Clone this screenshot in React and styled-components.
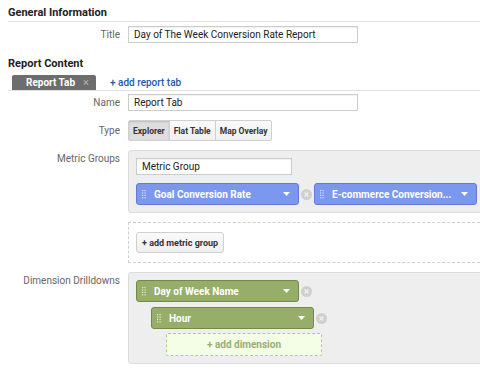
import React from "react";
import styled, { createGlobalStyle } from "styled-components";

const GlobalStyle = createGlobalStyle`
  html, body {
    margin: 0;
    padding: 0;
    background: #ffffff;
    overflow: hidden;
  }
  body {
    font-family: Roboto, "Liberation Sans", Arial, sans-serif;
    color: #333;
  }
`;

const metrics = ["Goal Conversion Rate", "E-commerce Conversion..."];

const App = () => {
  return (
    <Page>
      <GlobalStyle />
      <SectionTitle>General Information</SectionTitle>
      <Row $top={4}>
        <Label $center>Title</Label>
        <TextInput defaultValue="Day of The Week Conversion Rate Report" />
      </Row>

      <SectionTitle $plain $top={13}>Report Content</SectionTitle>
      <TabBar>
        <Tab>
          Report Tab <TabClose>×</TabClose>
        </Tab>
        <AddTab>+ add report tab</AddTab>
      </TabBar>

      <Row $top={3}>
        <Label $center>Name</Label>
        <TextInput defaultValue="Report Tab" />
      </Row>

      <Row $top={9}>
        <Label $center>Type</Label>
        <ButtonGroup>
          <TypeButton $active>Explorer</TypeButton>
          <TypeButton>Flat Table</TypeButton>
          <TypeButton>Map Overlay</TypeButton>
        </ButtonGroup>
      </Row>

      <Row $top={9}>
        <Label $pad={3}>Metric Groups</Label>
        <Panel>
          <GroupInput defaultValue="Metric Group" />
          <PillLine>
            {metrics.map((m, i) => (
              <React.Fragment key={m}>
                {i > 0 && <Remove />}
                <Pill $color="blue">
                  <Grip />
                  <PillText>{m}</PillText>
                  <Caret />
                </Pill>
              </React.Fragment>
            ))}
          </PillLine>
        </Panel>
      </Row>

      <Row $top={9}>
        <span />
        <DashedBox>
          <SmallButton>+ add metric group</SmallButton>
        </DashedBox>
      </Row>

      <Row $top={9}>
        <Label $pad={3}>Dimension Drilldowns</Label>
        <Panel>
          <PillLine>
            <Pill $color="green">
              <Grip />
              <PillText>Day of Week Name</PillText>
              <Caret />
            </Pill>
            <Remove />
          </PillLine>
          <PillLine $indent={15} $top={5}>
            <Pill $color="green">
              <Grip />
              <PillText>Hour</PillText>
              <Caret />
            </Pill>
            <Remove />
          </PillLine>
          <AddDimension>+ add dimension</AddDimension>
        </Panel>
      </Row>
    </Page>
  );
};

export default App;

const Grip = () => (
  <GripIcon width="4" height="9" viewBox="0 0 4 9">
    {[0, 1, 2, 3].map((r) =>
      [0, 1].map((c) => (
        <rect key={`${r}-${c}`} x={c * 2.5} y={r * 2.4} width="1.2" height="1.2" fill="rgba(255,255,255,0.75)" />
      ))
    )}
  </GripIcon>
);

const Caret = () => (
  <CaretIcon width="7" height="4" viewBox="0 0 7 4">
    <path d="M0 0 L7 0 L3.5 4 Z" fill="#fff" />
  </CaretIcon>
);

const Remove = () => (
  <RemoveIcon width="11" height="11" viewBox="0 0 11 11">
    <circle cx="5.5" cy="5.5" r="5.5" fill="#cfcfcf" />
    <path d="M3.6 3.6 L7.4 7.4 M7.4 3.6 L3.6 7.4" stroke="#f0f0f0" strokeWidth="1.4" />
  </RemoveIcon>
);

const Page = styled.div`
  padding: 0 0 0 8px;
  width: 480px;
  box-sizing: border-box;
`;

const SectionTitle = styled.div`
  font-size: 11px;
  font-weight: bold;
  color: #222;
  height: 15px;
  line-height: 15px;
  padding-top: ${(p) => p.$top ?? 5}px;
  padding-bottom: 1px;
  border-bottom: ${(p) => (p.$plain ? "none" : "1px solid #e2e2e2")};
`;

const Row = styled.div`
  display: grid;
  grid-template-columns: 112px 1fr;
  column-gap: 8px;
  align-items: start;
  margin-top: ${(p) => p.$top || 0}px;
`;

const Label = styled.div`
  font-size: 10px;
  color: #666;
  text-align: right;
  align-self: ${(p) => (p.$center ? "center" : "start")};
  padding-top: ${(p) => p.$pad || 0}px;
`;

const TextInput = styled.input`
  width: 230px;
  height: 17px;
  box-sizing: border-box;
  border: 1px solid #cccccc;
  box-shadow: inset 0 1px 1px rgba(0, 0, 0, 0.06);
  font-family: Roboto, "Liberation Sans", Arial, sans-serif;
  font-size: 10px;
  color: #222;
  padding: 0 5px;
  margin: 0;
  outline: none;
`;

const TabBar = styled.div`
  display: flex;
  align-items: center;
  margin-top: 3px;
  height: 15px;
  border-bottom: 1px solid #e2e2e2;
`;

const Tab = styled.div`
  margin-left: 4px;
  width: 84px;
  height: 15px;
  box-sizing: border-box;
  background: #6d6d6d;
  border-radius: 2px 2px 0 0;
  color: #fff;
  font-weight: bold;
  font-size: 10px;
  line-height: 15px;
  padding-left: 14px;
  display: flex;
  align-items: center;
  gap: 8px;
`;

const TabClose = styled.span`
  color: #b5b5b5;
  font-weight: normal;
  font-size: 11px;
`;

const AddTab = styled.a`
  margin-left: 14px;
  font-size: 10px;
  font-weight: 500;
  color: #1c5aa8;
  text-decoration: none;
`;

const ButtonGroup = styled.div`
  display: flex;
  height: 21px;
`;

const TypeButton = styled.div`
  height: 21px;
  box-sizing: border-box;
  padding: 0 4px;
  display: flex;
  align-items: center;
  font-weight: bold;
  font-size: 8.5px;
  color: #333;
  border: 1px solid #d0d0d0;
  margin-left: -1px;
  background: ${(p) => (p.$active ? "#dedede" : "linear-gradient(#fafafa, #f0f0f0)")};
  box-shadow: ${(p) => (p.$active ? "inset 0 1px 2px rgba(0,0,0,0.15)" : "none")};
  &:first-child {
    margin-left: 0;
    border-radius: 2px 0 0 2px;
  }
  &:last-child {
    border-radius: 0 2px 2px 0;
  }
`;

const Panel = styled.div`
  width: 362px;
  box-sizing: border-box;
  background: #eeeeee;
  border: 1px solid #dcdcdc;
  border-radius: 3px;
  padding: 7px 7px 7px;
`;

const GroupInput = styled(TextInput)`
  width: 156px;
  display: block;
  margin-bottom: 8px;
`;

const PillLine = styled.div`
  display: flex;
  align-items: center;
  gap: 2px;
  margin-left: ${(p) => p.$indent || 0}px;
  margin-top: ${(p) => p.$top || 0}px;
`;

const Pill = styled.div`
  width: 163px;
  height: 22px;
  box-sizing: border-box;
  border-radius: 3px;
  display: flex;
  align-items: center;
  padding: 0 8px 0 5px;
  background: ${(p) => (p.$color === "green" ? "#97ae6b" : "#7c97ee")};
  border: 1px solid ${(p) => (p.$color === "green" ? "#718a48" : "#5e7bd6")};
  color: #fff;
`;

const GripIcon = styled.svg`
  flex: none;
  margin-right: 8px;
`;

const PillText = styled.span`
  flex: 1;
  font-weight: bold;
  font-size: 10px;
  white-space: nowrap;
  overflow: hidden;
`;

const CaretIcon = styled.svg`
  flex: none;
`;

const RemoveIcon = styled.svg`
  flex: none;
`;

const DashedBox = styled.div`
  width: 362px;
  height: 41px;
  box-sizing: border-box;
  border: 1px dashed #cfcfcf;
  display: flex;
  align-items: center;
  padding-left: 7px;
`;

const SmallButton = styled.div`
  height: 21px;
  box-sizing: border-box;
  padding: 0 5px;
  display: flex;
  align-items: center;
  border: 1px solid #cfcfcf;
  border-radius: 3px;
  background: linear-gradient(#fafafa, #efefef);
  font-weight: bold;
  font-size: 9px;
  color: #333;
`;

const AddDimension = styled.div`
  margin: 4px 0 0 30px;
  width: 156px;
  height: 23px;
  box-sizing: border-box;
  border: 1px dashed #b4c98f;
  border-radius: 2px;
  background: #f4fde6;
  color: #98af73;
  font-weight: bold;
  font-size: 10px;
  display: flex;
  align-items: center;
  justify-content: center;
`;
